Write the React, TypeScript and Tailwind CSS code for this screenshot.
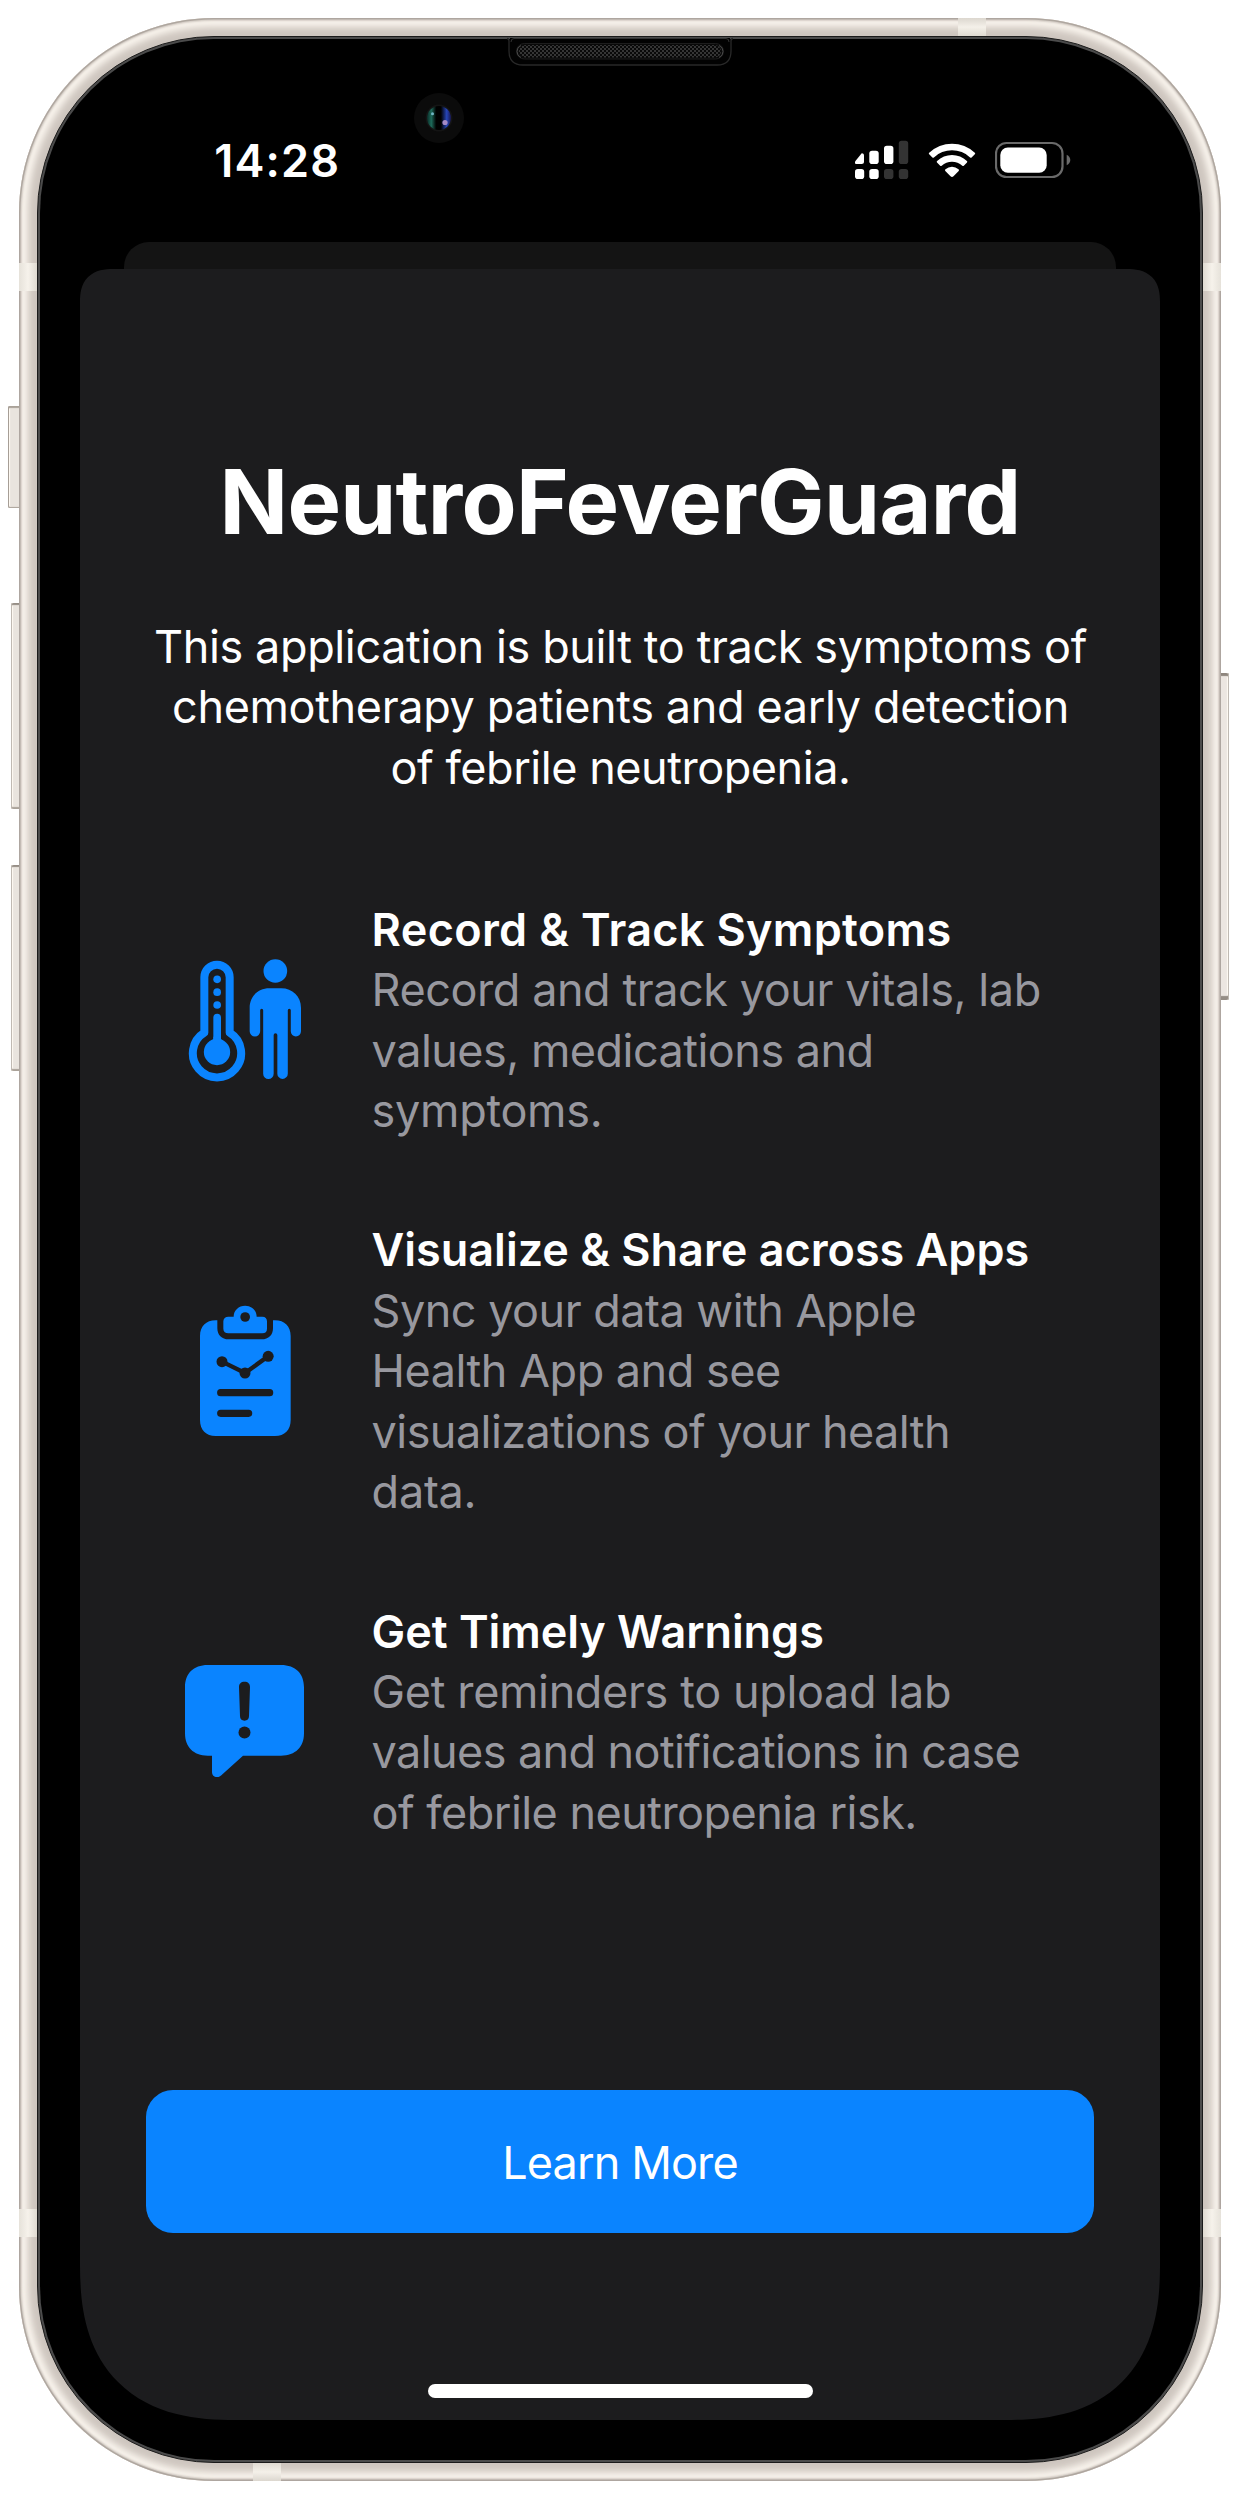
import type { ReactNode } from "react";

type TextLine = { text: string; tracking: string };

type Feature = {
  icon: ReactNode;
  title: TextLine;
  lines: TextLine[];
};

function SymptomsIcon() {
  return (
    <svg className="h-[130px] w-[120px] shrink-0" viewBox="75 107 360 390" fill="none">
      <path
        d="M133 340V174a38 38 0 0 1 76 0V340A72.5 72.5 0 1 1 133 340Z"
        stroke="#0a84ff"
        strokeWidth="24"
        strokeLinejoin="round"
      />
      <circle cx="171.500" cy="180" r="11.500" fill="#0a84ff" />
      <circle cx="171.500" cy="218.500" r="11.500" fill="#0a84ff" />
      <circle cx="171.500" cy="257" r="11.500" fill="#0a84ff" />
      <path d="M171.500 295V380" stroke="#0a84ff" strokeWidth="23" strokeLinecap="round" />
      <path d="M160 352v8l-8 6h39l-8-6v-8Z" fill="#0a84ff" />
      <circle cx="171" cy="398" r="39.500" fill="#0a84ff" />
      <circle cx="346" cy="155" r="35.500" fill="#0a84ff" />
      <path
        d="M269 265C269 231 295 207 328 207H364C397 207 423 231 423 265V336a15.300 15.300 0 0 1-30.600 0V273a4.500 4.500 0 0 0-9 0V463a15.700 15.700 0 0 1-31.400 0V347a5.500 5.500 0 0 0-11 0V463a15.700 15.700 0 0 1-31.500 0V273a4.500 4.500 0 0 0-9 0V336a15.700 15.700 0 0 1-31.500 0Z"
        fill="#0a84ff"
      />
    </svg>
  );
}

function ClipboardIcon() {
  return (
    <svg className="h-[130px] w-[120px] shrink-0 overflow-visible" viewBox="75 78 360 390" fill="none">
      <path
        d="M172 121H167C138 121 120 139 120 168V420C120 450 138 468 167 468H345C374 468 392 450 392 420V168C392 139 374 121 345 121H339V144C339 165 326 178 305 178H206C185 178 172 165 172 144Z"
        fill="#0a84ff"
      />
      <path
        d="M205 110H221C221 91 236 77 255.500 77S290 91 290 110H307C316 110 321 115 321 124V146C321 155 316 160 307 160H205C196 160 190 155 190 146V124C190 115 196 110 205 110Z"
        fill="#0a84ff"
      />
      <g fill="#1c1c1e" stroke="#1c1c1e" strokeLinecap="round">
        <circle cx="255.500" cy="111" r="14.500" stroke="none" />
        <circle cx="186" cy="245" r="16.500" stroke="none" />
        <circle cx="255" cy="279" r="16.500" stroke="none" />
        <circle cx="324.500" cy="229" r="16.500" stroke="none" />
        <path d="M186 245L255 279L324.500 229" fill="none" strokeWidth="13" />
        <path d="M182 338H329M182 400H266" strokeWidth="21.500" />
      </g>
    </svg>
  );
}

function WarningIcon() {
  return (
    <svg className="h-[130px] w-[120px] shrink-0" viewBox="75 53 360 390" fill="none">
      <path
        d="M143 77H363C407 77 432 103 432 144V282C432 323 407 349 363 349H249L189 403C182 410 178 413 171 413C162 413 156 407 156 397V349H143C100 349 75 323 75 282V144C75 103 100 77 143 77Z"
        fill="#0a84ff"
      />
      <path
        d="M237 143C237 133 243 127 253.500 127S270 133 270 143L267 230C267 239 262 244 253.500 244S240 239 240 230Z"
        fill="#1c1c1e"
      />
      <circle cx="253.500" cy="279.500" r="18" fill="#1c1c1e" />
    </svg>
  );
}

const INTRO: TextLine[] = [
  { text: "This application is built to track symptoms of", tracking: "tracking-[-0.38px]" },
  { text: "chemotherapy patients and early detection", tracking: "tracking-[-0.36px]" },
  { text: "of febrile neutropenia.", tracking: "tracking-[-0.46px]" },
];

const FEATURES: Feature[] = [
  {
    icon: <SymptomsIcon />,
    title: { text: "Record & Track Symptoms", tracking: "tracking-[0.32px]" },
    lines: [
      { text: "Record and track your vitals, lab", tracking: "tracking-[-0.44px]" },
      { text: "values, medications and", tracking: "tracking-[-0.52px]" },
      { text: "symptoms.", tracking: "tracking-[-0.3px]" },
    ],
  },
  {
    icon: <ClipboardIcon />,
    title: { text: "Visualize & Share across Apps", tracking: "tracking-[-0.02px]" },
    lines: [
      { text: "Sync your data with Apple", tracking: "tracking-[-0.51px]" },
      { text: "Health App and see", tracking: "tracking-[-0.5px]" },
      { text: "visualizations of your health", tracking: "tracking-[-0.56px]" },
      { text: "data.", tracking: "tracking-[-0.26px]" },
    ],
  },
  {
    icon: <WarningIcon />,
    title: { text: "Get Timely Warnings", tracking: "tracking-[-0.06px]" },
    lines: [
      { text: "Get reminders to upload lab", tracking: "tracking-[-0.36px]" },
      { text: "values and notifications in case", tracking: "tracking-[-0.6px]" },
      { text: "of febrile neutropenia risk.", tracking: "tracking-[-0.54px]" },
    ],
  },
];

function SignalIcon() {
  return (
    <svg className="h-[40px] w-[54px]" viewBox="855 140 54 40">
      <path d="M855 163V161.500L861.500 153.500C862 153 864 153.500 864 155.500V161.500Q864 164 861.500 164H856Q855 164 855 163Z" fill="#fff" />
      <rect x="869.300" y="150.700" width="9.400" height="13.300" rx="2.800" fill="#fff" />
      <rect x="884" y="145.700" width="9.400" height="18.300" rx="2.800" fill="#fff" />
      <rect x="898.800" y="140.800" width="9.400" height="23.200" rx="2.800" fill="#333" />
      <rect x="855" y="169" width="9.200" height="10" rx="2.800" fill="#fff" />
      <rect x="869.300" y="169" width="9.400" height="10" rx="2.800" fill="#fff" />
      <rect x="884" y="169" width="9.400" height="10" rx="2.800" fill="#333" />
      <rect x="898.800" y="169" width="9.400" height="10" rx="2.800" fill="#333" />
    </svg>
  );
}

function WifiIcon() {
  return (
    <svg className="h-[40px] w-[48px]" viewBox="927.500 140 48 40" fill="#fff">
      <path d="M951.500 177Q950.800 177 950 176.200L944.800 170.900Q944 170 945 169.200Q947.800 166.700 951.500 166.700T958 169.200Q959 170 958.200 170.900L953 176.200Q952.200 177 951.500 177Z" />
      <path d="M936.500 162.500Q935.800 161.700 936.600 160.900A21.500 21.500 0 0 1 966.400 160.900Q967.200 161.700 966.500 162.500L963.300 165.700Q962.600 166.300 961.800 165.700A15.500 15.500 0 0 0 941.200 165.700Q940.400 166.300 939.700 165.700Z" />
      <path d="M928.700 154.300Q928 153.500 928.700 152.800A33 33 0 0 1 974.300 152.800Q975 153.500 974.300 154.300L971.100 157.400Q970.400 158 969.600 157.400A26.500 26.500 0 0 0 933.400 157.400Q932.600 158 931.900 157.400Z" />
    </svg>
  );
}

function BatteryIcon() {
  return (
    <svg className="h-[40px] w-[76px]" viewBox="995 140 76 40">
      <rect x="996" y="143" width="66.500" height="34" rx="10.500" fill="none" stroke="#6a6a6a" strokeWidth="2.200" />
      <rect x="1000.300" y="147.600" width="46.400" height="25.200" rx="7.500" fill="#fff" />
      <path d="M1066.700 154.800C1069 156 1070.300 157.800 1070.300 160S1069 164 1066.700 165.200Z" fill="#6a6a6a" />
    </svg>
  );
}

function StatusBar() {
  return (
    <div className="flex items-start justify-between pr-[129px] pl-[174.3px] pt-[91.600px]">
      <span className="text-[45px] leading-[60px] font-semibold tracking-[1.15px] text-white">14:28</span>
      <div className="flex items-start pt-[9.400px]">
        <SignalIcon />
        <div className="ml-[18.500px]">
          <WifiIcon />
        </div>
        <div className="ml-[19.500px]">
          <BatteryIcon />
        </div>
      </div>
    </div>
  );
}

function Hardware() {
  return (
    <>
      {/* side buttons */}
      <div className="absolute top-[406px] left-[8px] h-[102px] w-[13px] rounded-l-[2px] bg-[#e9e4de] shadow-[inset_1px_0_0_#a69e96,inset_0_2px_1px_#aaa299,inset_0_-1px_1px_#aaa299,inset_2px_0_1px_#fffaf3]" />
      <div className="absolute top-[603px] left-[11px] h-[206px] w-[10px] rounded-l-[2px] bg-[#e9e4de] shadow-[inset_1px_0_0_#c0bab3,inset_0_2px_1px_#958d85,inset_0_-2px_1px_#aaa299,inset_2px_0_1px_#fffaf3]" />
      <div className="absolute top-[865px] left-[11px] h-[206px] w-[10px] rounded-l-[2px] bg-[#e9e4de] shadow-[inset_1px_0_0_#c0bab3,inset_0_2px_1px_#958d85,inset_0_-2px_1px_#aaa299,inset_2px_0_1px_#fffaf3]" />
      <div className="absolute top-[673px] left-[1219px] h-[327px] w-[10px] rounded-r-[2px] bg-[#ece6e1] shadow-[inset_-1px_0_0_#c0bab3,inset_0_3px_1px_#8e867e,inset_0_-4px_1px_#958d85,inset_-2px_0_1px_#fffaf3]" />
    </>
  );
}

function AntennaBands() {
  return (
    <>
      <div className="absolute top-[245px] left-0 h-[28px] w-[18px] bg-linear-to-r from-[#e6e2da] via-[#f6f2eb] to-[#dfdad1]" />
      <div className="absolute top-[2191px] left-0 h-[28px] w-[18px] bg-linear-to-r from-[#e6e2da] via-[#f6f2eb] to-[#dfdad1]" />
      <div className="absolute top-[245px] right-0 h-[28px] w-[18px] bg-linear-to-l from-[#e6e2da] via-[#f6f2eb] to-[#dfdad1]" />
      <div className="absolute top-[2191px] right-0 h-[28px] w-[18px] bg-linear-to-l from-[#e6e2da] via-[#f6f2eb] to-[#dfdad1]" />
      <div className="absolute top-0 left-[939px] h-[18px] w-[28px] bg-linear-to-b from-[#dcd7cf] via-[#f4f0e9] to-[#dfdad1]" />
      <div className="absolute bottom-0 left-[234px] h-[18px] w-[28px] bg-linear-to-t from-[#dcd7cf] via-[#f4f0e9] to-[#dfdad1]" />
    </>
  );
}

function FrontSensors() {
  return (
    <>
      <svg className="absolute top-[37px] left-[506px] h-[32px] w-[228px]" viewBox="506 37 228 32" fill="none">
        <defs>
          <pattern id="mesh" width="4" height="4" patternUnits="userSpaceOnUse">
            <rect width="2" height="2" fill="#353535" />
            <rect x="2" y="2" width="2" height="2" fill="#353535" />
          </pattern>
        </defs>
        <path d="M510 38H730V52Q730 65 717 65H523Q510 65 510 52Z" fill="#020202" />
        <path d="M507 38.500Q509 38.500 509 41V51Q509 65 523 65H717Q731 65 731 51V41Q731 38.500 733 38.500" stroke="#292929" strokeWidth="1.300" />
        <path d="M511 42Q511 38.500 514 38.500H726Q729 38.500 729 42" stroke="#333" strokeWidth="1" />
        <rect x="516.500" y="43.500" width="207" height="15.500" rx="7.750" fill="#090909" stroke="#1d1d1d" />
        <rect x="519" y="45" width="202" height="12.500" rx="6.250" fill="url(#mesh)" />
        <path d="M521 45.500Q517 47 517 51.500T521 57.500M719 45.500Q723 47 723 51.500T719 57.500" stroke="#4a4a4a" />
      </svg>
      <svg className="absolute top-[93px] left-[414px] h-[50px] w-[50px]" viewBox="0 0 50 50">
        <defs>
          <linearGradient id="lens">
            <stop offset="0" stopColor="#0a2a26" />
            <stop offset="0.180" stopColor="#1d6a5a" />
            <stop offset="0.380" stopColor="#000" />
            <stop offset="0.580" stopColor="#000" />
            <stop offset="0.820" stopColor="#2746b8" />
            <stop offset="1" stopColor="#17164f" />
          </linearGradient>
        </defs>
        <circle cx="25" cy="25" r="25" fill="#0b0b0b" />
        <circle cx="25" cy="25" r="13.500" fill="#141414" />
        <circle cx="25" cy="25" r="12" fill="url(#lens)" />
        <circle cx="18.500" cy="20.700" r="1.500" fill="#6fb7c4" />
        <circle cx="31" cy="29.500" r="2.600" fill="#a48ac6" />
      </svg>
    </>
  );
}

export default function App() {
  return (
    <div className="relative h-[2500px] w-[1240px] overflow-hidden bg-white pt-[18px] pl-[19px] font-['Inter',sans-serif]">
      <Hardware />
      <div className="relative h-[2463px] w-[1202px] rounded-[195px] bg-[#cec6bf] p-[18px] shadow-[inset_0_0_1px_1.500px_#aca49d,inset_0_0_2px_3px_#d8d1ca,inset_0_0_7px_9px_#faf5ee]">
        <AntennaBands />
        <div className="relative h-full rounded-[177px] border border-[#1a1a1a] bg-[#4b4b4b] p-[2px]">
          <div className="flex h-full flex-col overflow-hidden rounded-[174px] bg-black">
            <div className="h-[203px] shrink-0">
              <StatusBar />
            </div>
            <div className="mx-[84px] h-[27px] shrink-0 rounded-t-[25px] bg-[#141414]" />
            <main className="mx-[40px] flex h-[2151px] shrink-0 flex-col rounded-t-[28px] rounded-b-[134px] bg-[#1c1c1e] supports-[corner-shape:squircle]:rounded-t-[33px] supports-[corner-shape:squircle]:rounded-b-[155px] supports-[corner-shape:squircle]:[corner-shape:superellipse(1.3)]">
              <h1 className="mt-[178.500px] text-center text-[90px] leading-[108px] font-bold tracking-[-0.74px] whitespace-nowrap text-white">
                NeutroFeverGuard
              </h1>
              <p className="mt-[61.200px] pl-px text-center text-[45px] leading-[60.500px] whitespace-nowrap text-white">
                {INTRO.map((line) => (
                  <span key={line.text} className={`block ${line.tracking}`}>
                    {line.text}
                  </span>
                ))}
              </p>
              <div className="mt-[100.600px] flex flex-col gap-[77.900px] pl-[105px]">
                {FEATURES.map((feature) => (
                  <section key={feature.title.text} className="flex items-center gap-[66.600px] whitespace-nowrap">
                    {feature.icon}
                    <div className="text-[45px]">
                      <h2 className={`leading-[61.300px] font-semibold text-white ${feature.title.tracking}`}>
                        {feature.title.text}
                      </h2>
                      <p className="leading-[60.500px] text-[#98989f]">
                        {feature.lines.map((line) => (
                          <span key={line.text} className={`block ${line.tracking}`}>
                            {line.text}
                          </span>
                        ))}
                      </p>
                    </div>
                  </section>
                ))}
              </div>
              <button className="mx-[66px] mt-auto h-[143px] shrink-0 rounded-[27px] bg-[#0a84ff] pt-[2px] text-center text-[45px] leading-[60px] tracking-[-0.88px] text-white">
                Learn More
              </button>
              <div className="mx-auto mt-[151px] mb-[22px] h-[14px] w-[385px] shrink-0 rounded-full bg-white" />
            </main>
          </div>
        </div>
      </div>
      <FrontSensors />
    </div>
  );
}
